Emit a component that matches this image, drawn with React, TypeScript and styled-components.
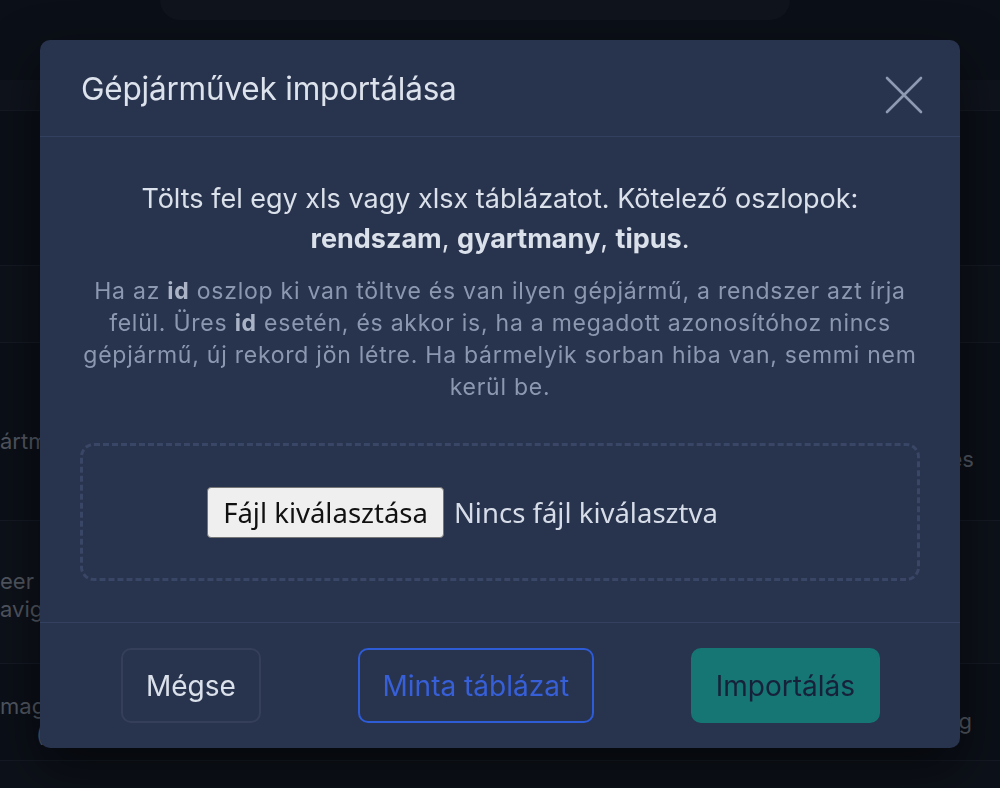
import React from 'react';
import styled, { createGlobalStyle } from 'styled-components';

const GlobalStyle = createGlobalStyle`
  html, body {
    margin: 0;
    padding: 0;
    background: #0b0f17;
    font-family: Inter, "Noto Sans", sans-serif;
  }
  * {
    box-sizing: border-box;
  }
`;

const Page = styled.div`
  width: 1000px;
  height: 788px;
  overflow: hidden;
  background: #0b0f17;
`;

const TopCard = styled.div`
  width: 630px;
  height: 20px;
  margin-left: 160px;
  background: #10141d;
  border-radius: 0 0 26px 26px;
`;

const TableHead = styled.div`
  height: 30px;
  margin-top: 60px;
  background: #0f131c;
`;

const BgRow = styled.div<{ $height: number; $shade?: boolean }>`
  display: flex;
  align-items: flex-start;
  justify-content: space-between;
  height: ${({ $height }) => $height}px;
  border-top: 1px solid #141923;
  background: ${({ $shade }) => ($shade ? '#0d1119' : '#0b0f17')};
  color: #50555f;
  font-size: 22px;
  line-height: 28px;
`;

const BgCell = styled.div<{ $top?: number; $indent?: number }>`
  padding-top: ${({ $top }) => $top || 0}px;
  padding-left: ${({ $indent }) => $indent || 0}px;
  white-space: nowrap;
`;

const BgCellRight = styled.div<{ $top?: number; $offset?: number }>`
  padding-top: ${({ $top }) => $top || 0}px;
  margin-right: ${({ $offset }) => $offset || 0}px;
  white-space: nowrap;
`;

const Modal = styled.div`
  position: fixed;
  top: 40px;
  left: 40px;
  width: 920px;
  background: #28334e;
  border-radius: 10px;
  box-shadow: 0 20px 50px rgba(0, 0, 0, 0.5);
  display: flex;
  flex-direction: column;
`;

const Header = styled.div`
  height: 97px;
  display: flex;
  align-items: center;
  justify-content: space-between;
  padding: 0 36px 0 41px;
  border-bottom: 1px solid #34405f;
`;

const Title = styled.h2`
  margin: 0;
  font-size: 31.5px;
  font-weight: 400;
  color: #dde3ec;
  letter-spacing: -0.2px;
`;

const CloseButton = styled.button`
  width: 40px;
  height: 40px;
  margin-top: 14px;
  padding: 0;
  border: none;
  background: transparent;
  display: flex;
  align-items: center;
  justify-content: center;
  color: #8d9ab2;
  cursor: pointer;
`;

const Body = styled.div`
  padding: 42px 40px 41px;
  border-bottom: 1px solid #34405f;
  display: flex;
  flex-direction: column;
  align-items: center;
  text-align: center;
`;

const Lead = styled.p`
  margin: 0;
  font-size: 27px;
  line-height: 40px;
  color: #dbe1ea;
  strong {
    font-weight: 700;
  }
`;

const Note = styled.p`
  margin: 16px 0 0;
  font-size: 23px;
  line-height: 32px;
  letter-spacing: 0.75px;
  color: #8c98b0;
  strong {
    font-weight: 700;
    color: #aab4c6;
  }
`;

const DropZone = styled.div`
  margin-top: 40px;
  width: 840px;
  height: 138px;
  border: 3px dashed #3a4665;
  border-radius: 14px;
  display: flex;
  align-items: center;
  justify-content: center;
  gap: 10px;
  padding-right: 75px;
`;

const FileButton = styled.span`
  display: inline-flex;
  align-items: center;
  height: 51px;
  padding: 0 15px;
  background: #efefef;
  border: 1px solid #767676;
  border-radius: 4px;
  color: #111;
  font-family: "Noto Sans", sans-serif;
  font-size: 27.5px;
`;

const FileName = styled.span`
  color: #d7dde8;
  font-family: "Noto Sans", sans-serif;
  font-size: 27.5px;
`;

const Footer = styled.div`
  display: flex;
  align-items: center;
  justify-content: space-between;
  padding: 25px 80px 25px 81px;
`;

const Button = styled.button<{ $variant: 'ghost' | 'outline' | 'solid' }>`
  height: 75px;
  padding: 0 23px;
  border-radius: 10px;
  font-family: Inter, "Noto Sans", sans-serif;
  font-size: 28px;
  font-weight: 400;
  cursor: pointer;
  border: 2px solid
    ${({ $variant }) =>
      $variant === 'ghost' ? '#363f59' : $variant === 'outline' ? '#2e5bd6' : '#157673'};
  background: ${({ $variant }) => ($variant === 'solid' ? '#157673' : 'transparent')};
  color: ${({ $variant }) =>
    $variant === 'ghost' ? '#dbe1ea' : $variant === 'outline' ? '#3760d8' : '#17213a'};
`;

const App: React.FC = () => {
  return (
    <>
      <GlobalStyle />
      <Page>
        <TopCard />
        <TableHead />
        <BgRow $height={155} />
        <BgRow $height={77} $shade />
        <BgRow $height={178}>
          <BgCell $top={84}>ártmány</BgCell>
          <BgCellRight $top={102} $offset={26}>es</BgCellRight>
        </BgRow>
        <BgRow $height={143} $shade>
          <BgCell $top={46}>
            eer
            <br />
            avig
          </BgCell>
        </BgRow>
        <BgRow $height={97}>
          <BgCell $top={28}>
            mag
            <br />
            <BgCell as="span" $indent={36}>(</BgCell>
          </BgCell>
          <BgCellRight $top={43} $offset={28}>g</BgCellRight>
        </BgRow>
        <BgRow $height={40} $shade />

        <Modal>
          <Header>
            <Title>Gépjárművek importálása</Title>
            <CloseButton aria-label="Bezárás">
              <svg width="38" height="38" viewBox="0 0 38 38" fill="none">
                <path d="M2 2L36 36M36 2L2 36" stroke="currentColor" strokeWidth="2.6" strokeLinecap="round" />
              </svg>
            </CloseButton>
          </Header>
          <Body>
            <Lead>
              Tölts fel egy xls vagy xlsx táblázatot. Kötelező oszlopok:{' '}
              <strong>rendszam</strong>, <strong>gyartmany</strong>, <strong>tipus</strong>.
            </Lead>
            <Note>
              Ha az <strong>id</strong> oszlop ki van töltve és van ilyen gépjármű, a rendszer azt írja
              felül. Üres <strong>id</strong> esetén, és akkor is, ha a megadott azonosítóhoz nincs
              gépjármű, új rekord jön létre. Ha bármelyik sorban hiba van, semmi nem kerül be.
            </Note>
            <DropZone>
              <FileButton>Fájl kiválasztása</FileButton>
              <FileName>Nincs fájl kiválasztva</FileName>
            </DropZone>
          </Body>
          <Footer>
            <Button $variant="ghost">Mégse</Button>
            <Button $variant="outline">Minta táblázat</Button>
            <Button $variant="solid">Importálás</Button>
          </Footer>
        </Modal>
      </Page>
    </>
  );
};

export default App;
